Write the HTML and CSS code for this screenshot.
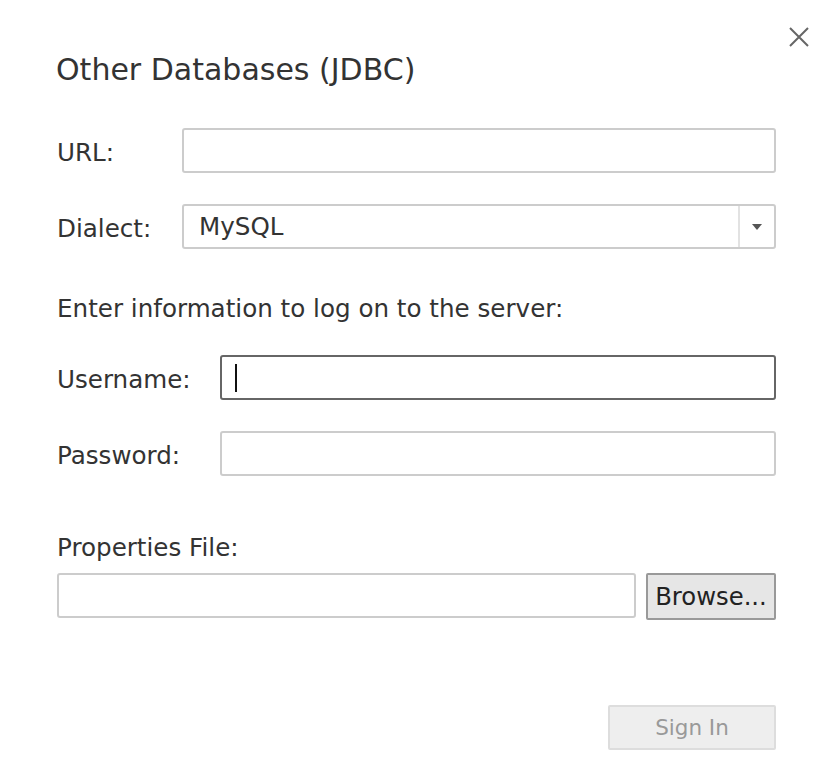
FILE: index.html
```html
<!DOCTYPE html>
<html lang="en">
<head>
<meta charset="utf-8">
<title>Other Databases (JDBC)</title>
<link rel="stylesheet" href="styles.css">
</head>
<body>
<div class="dialog">
  <button class="close" aria-label="Close">
    <svg width="20" height="20" viewBox="0 0 20 20"><path d="M1 1 L19 19 M19 1 L1 19" stroke="#666" stroke-width="2" fill="none"/></svg>
  </button>
  <h1 class="title">Other Databases (JDBC)</h1>

  <div class="grid grid-top">
    <label class="label">URL:</label>
    <div class="field"></div>
    <label class="label">Dialect:</label>
    <div class="field select">
      <span class="select-value">MySQL</span>
      <span class="select-arrow"><svg width="10" height="6" viewBox="0 0 10 6"><path d="M0 0 H10 L5 6 Z" fill="#555"/></svg></span>
    </div>
  </div>

  <p class="text intro">Enter information to log on to the server:</p>

  <div class="grid grid-login">
    <label class="label">Username:</label>
    <div class="field focused"><span class="caret"></span></div>
    <label class="label">Password:</label>
    <div class="field"></div>
  </div>

  <p class="text props-label">Properties File:</p>
  <div class="props-row">
    <div class="field props-field"></div>
    <button class="btn browse">Browse...</button>
  </div>

  <div class="footer">
    <button class="btn signin" disabled>Sign In</button>
  </div>
</div>
</body>
</html>
```

FILE: styles.css
```css
html, body {
  margin: 0;
  padding: 0;
  background: #ffffff;
}
body {
  font-family: "DejaVu Sans", "Liberation Sans", sans-serif;
  color: #333333;
}
.dialog {
  position: relative;
  width: 834px;
  height: 776px;
  box-sizing: border-box;
  padding: 52px 58px 0 57px;
  display: flex;
  flex-direction: column;
}
.close {
  position: absolute;
  top: 27px;
  left: 789px;
  width: 20px;
  height: 20px;
  padding: 0;
  border: 0;
  background: transparent;
  display: block;
}
.close svg { display: block; }
.title {
  margin: 0;
  font-size: 30px;
  line-height: 36px;
  font-weight: normal;
  color: #333333;
  margin-left: -1px;
}
.grid {
  display: grid;
  row-gap: 31px;
  align-items: center;
}
.grid-top {
  margin-top: 40px;
  grid-template-columns: 125px 1fr;
}
.grid-login {
  margin-top: 31px;
  grid-template-columns: 163px 1fr;
}
.label, .text {
  font-size: 24.6px;
  line-height: 30px;
  color: #333333;
}
.label {
  padding-top: 5px;
}
.text {
  margin: 0;
}
.intro {
  margin-top: 45px;
}
.field {
  height: 45px;
  box-sizing: border-box;
  border: 2px solid #cccccc;
  border-radius: 3px;
  background: #ffffff;
  display: flex;
  align-items: center;
}
.field.focused {
  border-color: #666666;
}
.caret {
  width: 2px;
  height: 28px;
  background: #111111;
  margin-left: 13px;
}
.select {
  justify-content: space-between;
}
.select-value {
  font-size: 24.6px;
  padding-left: 15px;
  color: #333333;
}
.select-arrow {
  width: 36px;
  height: 100%;
  border-left: 2px solid #e2e2e2;
  display: flex;
  align-items: center;
  justify-content: center;
  box-sizing: border-box;
}
.select-arrow svg { display: block; }
.props-label {
  margin-top: 57px;
}
.props-row {
  margin-top: 10px;
  display: flex;
  align-items: flex-start;
  gap: 10px;
}
.props-field {
  flex: 1;
}
.btn {
  font-family: "DejaVu Sans", "Liberation Sans", sans-serif;
  box-sizing: border-box;
  padding: 0;
  border-radius: 2px;
}
.browse {
  width: 130px;
  height: 47px;
  border: 2px solid #999999;
  background: #e6e6e6;
  color: #222222;
  font-size: 24.3px;
}
.footer {
  margin-top: 85px;
  display: flex;
  justify-content: flex-end;
}
.signin {
  width: 168px;
  height: 45px;
  border: 2px solid #dddddd;
  background: #eeeeee;
  color: #999999;
  font-size: 21.5px;
}
```
